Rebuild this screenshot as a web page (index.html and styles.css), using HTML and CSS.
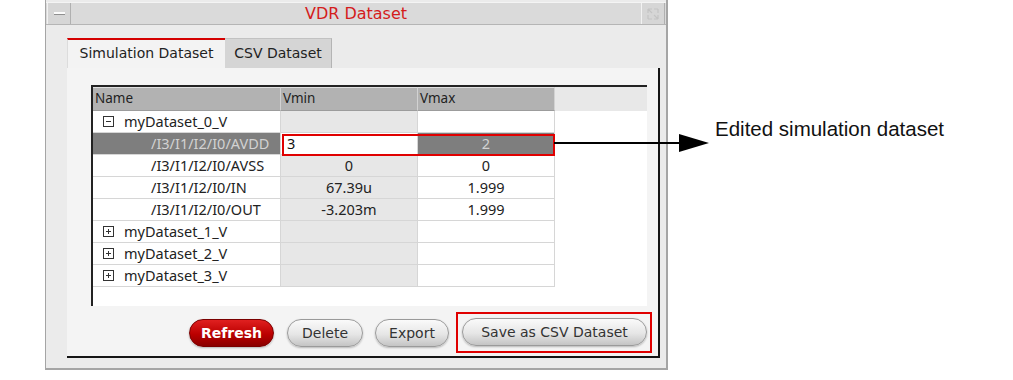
FILE: index.html
```html
<!DOCTYPE html>
<html lang="en">
<head>
    <meta charset="UTF-8">
    <title>VDR Dataset</title>
    <link rel="stylesheet" href="styles.css">
</head>
<body>
    <div class="window">
        <div class="titlebar">
            <div class="tb-btn tb-min"><span class="dash"></span></div>
            <div class="tb-title">VDR Dataset</div>
            <div class="tb-btn tb-max">
                <svg width="14" height="14" viewBox="0 0 14 14">
                    <path d="M2 2h4M2 2v4M2 2l4 4M12 12h-4M12 12v-4M12 12l-4-4M12 2h-4M12 2v4M2 12h4M2 12v-4" stroke="#c4c4c4" stroke-width="1.2" fill="none"/>
                </svg>
            </div>
        </div>

        <div class="frame">
            <div class="tabs">
                <div class="tab active">Simulation Dataset</div>
                <div class="tab">CSV Dataset</div>
            </div>

            <div class="panel">
                <div class="table-frame">
                    <div class="row head">
                        <div class="cell">Name</div>
                        <div class="cell">Vmin</div>
                        <div class="cell">Vmax</div>
                    </div>
                    <div class="row">
                        <div class="cell name">
                            <svg class="tree" width="11" height="11" viewBox="0 0 11 11"><rect x="0.5" y="0.5" width="10" height="10" fill="#fff" stroke="#333"/><path d="M3 5.5h5" stroke="#333"/></svg>
                            myDataset_0_V
                        </div>
                        <div class="cell num"></div>
                        <div class="cell num"></div>
                    </div>
                    <div class="row selected">
                        <div class="cell name child">/I3/I1/I2/I0/AVDD</div>
                        <div class="cell num editing">3</div>
                        <div class="cell num">2</div>
                    </div>
                    <div class="row">
                        <div class="cell name child">/I3/I1/I2/I0/AVSS</div>
                        <div class="cell num">0</div>
                        <div class="cell num">0</div>
                    </div>
                    <div class="row">
                        <div class="cell name child">/I3/I1/I2/I0/IN</div>
                        <div class="cell num">67.39u</div>
                        <div class="cell num">1.999</div>
                    </div>
                    <div class="row">
                        <div class="cell name child">/I3/I1/I2/I0/OUT</div>
                        <div class="cell num">-3.203m</div>
                        <div class="cell num">1.999</div>
                    </div>
                    <div class="row">
                        <div class="cell name">
                            <svg class="tree" width="11" height="11" viewBox="0 0 11 11"><rect x="0.5" y="0.5" width="10" height="10" fill="#fff" stroke="#333"/><path d="M3 5.5h5M5.5 3v5" stroke="#333"/></svg>
                            myDataset_1_V
                        </div>
                        <div class="cell num"></div>
                        <div class="cell num"></div>
                    </div>
                    <div class="row">
                        <div class="cell name">
                            <svg class="tree" width="11" height="11" viewBox="0 0 11 11"><rect x="0.5" y="0.5" width="10" height="10" fill="#fff" stroke="#333"/><path d="M3 5.5h5M5.5 3v5" stroke="#333"/></svg>
                            myDataset_2_V
                        </div>
                        <div class="cell num"></div>
                        <div class="cell num"></div>
                    </div>
                    <div class="row">
                        <div class="cell name">
                            <svg class="tree" width="11" height="11" viewBox="0 0 11 11"><rect x="0.5" y="0.5" width="10" height="10" fill="#fff" stroke="#333"/><path d="M3 5.5h5M5.5 3v5" stroke="#333"/></svg>
                            myDataset_3_V
                        </div>
                        <div class="cell num"></div>
                        <div class="cell num"></div>
                    </div>
                </div>

                <div class="actions">
                    <button class="btn btn-red">Refresh</button>
                    <button class="btn btn-delete">Delete</button>
                    <button class="btn btn-export">Export</button>
                    <div class="highlight">
                        <button class="btn btn-save">Save as CSV Dataset</button>
                    </div>
                </div>
            </div>
        </div>
    </div>

    <!-- annotation drawn over the screenshot -->
    <div class="callout-box"></div>
    <svg class="callout-arrow" width="160" height="24" viewBox="0 0 160 24">
        <path d="M0 12H128" stroke="#000" stroke-width="2"/>
        <path d="M125 3L155 12L125 21Z" fill="#000"/>
    </svg>
    <div class="callout-text">Edited simulation dataset</div>
</body>
</html>
```

FILE: styles.css
```css
body {
    margin: 0;
    background-color: #ffffff;
    font-family: "DejaVu Sans", sans-serif;
    color: #222222;
    position: relative;
    height: 380px;
}

.window {
    width: 620px;
    height: 366px;
    margin-left: 45px;
    padding-top: 2px;
    background-color: #ebebeb;
    border-left: 1px solid #a5a5a5;
    border-right: 2px solid #a5a5a5;
    border-bottom: 2px solid #a5a5a5;
}

/* title bar */
.titlebar {
    display: flex;
    height: 23px;
    background-color: #dadada;
    border-top: 1px solid #f4f4f4;
    border-bottom: 1px solid #b5b5b5;
    box-sizing: border-box;
}
.tb-btn {
    width: 24px;
    display: flex;
    align-items: center;
    justify-content: center;
    background-color: #d6d6d6;
    border-left: 1px solid #f2f2f2;
    border-right: 1px solid #b0b0b0;
    box-sizing: border-box;
}
.tb-min {
    margin-left: 1px;
}
.tb-max {
    margin-right: 1px;
}
.dash {
    width: 11px;
    height: 2px;
    background-color: #fbfbfb;
    border-bottom: 1px solid #8f8f8f;
}
.tb-title {
    flex: 1;
    text-align: center;
    color: #d41c1c;
    font-size: 16px;
    line-height: 22px;
}

/* tabs */
.frame {
    padding: 13px 6px 0 21px;
}
.tabs {
    display: flex;
    align-items: flex-end;
    height: 30px;
}
.tab {
    height: 30px;
    box-sizing: border-box;
    font-size: 14px;
    line-height: 27px;
    text-align: center;
}
.tab.active {
    width: 158px;
    background-color: #f3f3f3;
    border-top: 2px solid #d40000;
    border-left: 1px solid #dcdcdc;
}
.tab:not(.active) {
    width: 107px;
    background-color: #d5d5d5;
    border-top: 1px solid #c2c2c2;
    border-right: 1px solid #b4b4b4;
    line-height: 29px;
}

/* panel */
.panel {
    height: 290px;
    box-sizing: border-box;
    padding: 17px 0 0 24px;
    background-color: #f4f4f4;
    border-right: 2px solid #151515;
    border-bottom: 2px solid #151515;
}

.table-frame {
    width: 556px;
    height: 221px;
    box-sizing: border-box;
    background-color: #ffffff;
    border-top: 2px solid #222222;
    border-left: 2px solid #222222;
    font-family: "Noto Sans", sans-serif;
    font-size: 14.5px;
}
.row {
    display: grid;
    grid-template-columns: 188px 137px 137px;
    height: 22px;
}
.row.head {
    height: 24px;
    background-color: #e8e8e8;
}
.cell {
    box-sizing: border-box;
    border-bottom: 1px solid #d6d6d6;
    border-right: 1px solid #d6d6d6;
    line-height: 21px;
    white-space: nowrap;
    overflow: hidden;
}
.head .cell {
    background-color: #b2b2b2;
    border-top: 1px solid #e0e0e0;
    border-right: 1px solid #d2d2d2;
    border-bottom: 1px solid #9c9c9c;
    padding-left: 2px;
    font-size: 13.5px;
    line-height: 21px;
}
.name {
    display: flex;
    align-items: center;
    padding-left: 10px;
}
.tree {
    margin-right: 10px;
    flex-shrink: 0;
}
.name.child {
    padding-left: 58px;
}
.num {
    text-align: center;
}
.row:not(.head) .cell:nth-child(2) {
    background-color: #e7e7e7;
}

.row.selected .cell {
    background-color: #7e7e7e;
    color: #d2d2d2;
}
.row.selected .cell.editing {
    background-color: #ffffff;
    color: #111111;
    text-align: left;
    padding-left: 6px;
}

/* buttons */
.actions {
    display: flex;
    justify-content: flex-end;
    align-items: center;
    margin-top: 6px;
    margin-right: 6px;
}
.btn {
    height: 28px;
    border-radius: 14px;
    border: 1px solid #9a9a9a;
    background: linear-gradient(#fafafa, #e6e6e6 55%, #c4c4c4);
    box-shadow: 0 1px 2px rgba(0, 0, 0, 0.25);
    font-family: "DejaVu Sans", sans-serif;
    font-size: 14px;
    color: #333333;
    padding: 0;
}
.btn-red {
    width: 85px;
    margin-right: 13px;
    background: linear-gradient(#e02020, #bb0000 55%, #8a0000);
    border-color: #7a0000;
    color: #ffffff;
    font-weight: bold;
}
.btn-delete {
    width: 76px;
    margin-right: 12px;
}
.btn-export {
    width: 74px;
    margin-right: 7px;
}
.btn-save {
    width: 185px;
}
.highlight {
    border: 2px solid #e00000;
    padding: 4px 3px 5px 4px;
}

/* annotation */
.callout-box {
    position: absolute;
    left: 282px;
    top: 134px;
    width: 273px;
    height: 22px;
    box-sizing: border-box;
    border: 2px solid #e00000;
}
.callout-arrow {
    position: absolute;
    left: 554px;
    top: 131px;
}
.callout-text {
    position: absolute;
    left: 715px;
    top: 119px;
    font-family: "Liberation Sans", Arial, sans-serif;
    font-size: 20.5px;
    line-height: 1;
    color: #111111;
}
```
